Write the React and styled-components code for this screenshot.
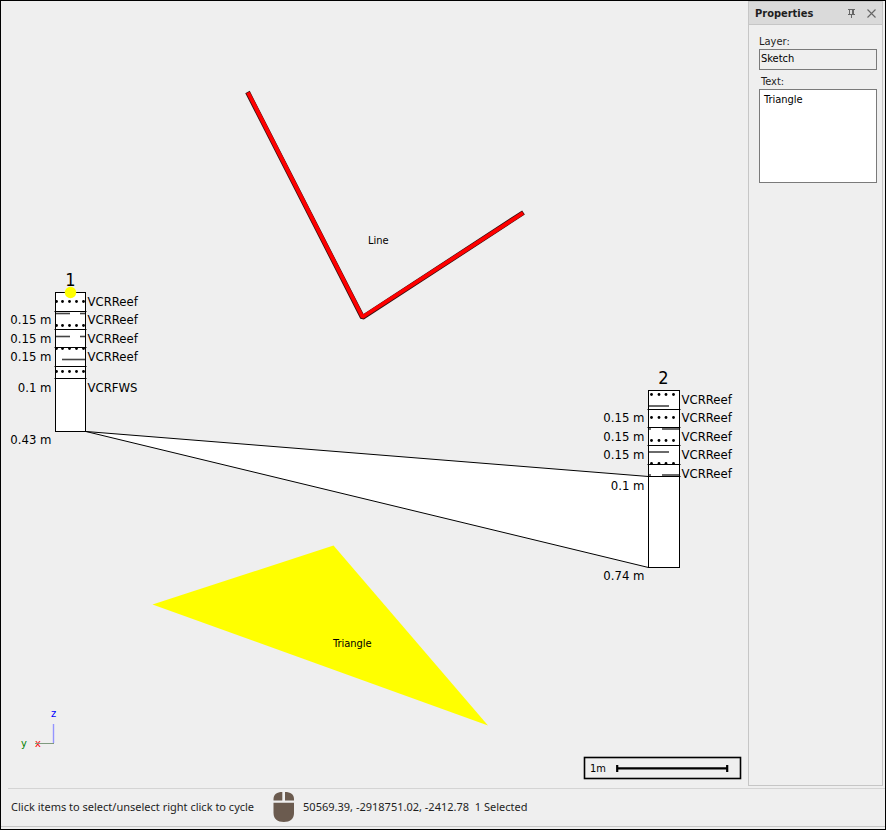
import { useState } from "react";
import styled, { createGlobalStyle } from "styled-components";

const GlobalStyle = createGlobalStyle`
  * {
    box-sizing: border-box;
  }
  body {
    margin: 0;
    background-color: #efefef;
    font-family: "DejaVu Sans Condensed", "DejaVu Sans", sans-serif;
    font-size: 11px;
    color: #1e1e1e;
  }
`;

const Window = styled.div`
  display: flex;
  flex-direction: column;
  height: 100vh;
  border: 1px solid #000;
  background-color: #efefef;
`;

const Workspace = styled.main`
  display: flex;
  flex: 1;
  min-height: 0;
`;

const Canvas = styled.svg`
  flex: 1;
  min-width: 0;
  height: 100%;
  display: block;
`;

const CanvasText = styled.text`
  font-size: ${(props) => props.$size || 13}px;
  fill: ${(props) => props.$color || "#000"};
  text-anchor: ${(props) => props.$anchor || "start"};
`;

const Panel = styled.aside`
  width: 135px;
  margin: 0 2px 2px 0;
  border: 1px solid #c6c6c6;
`;

const PanelHeader = styled.header`
  display: flex;
  align-items: center;
  height: 23px;
  padding: 0 1px 0 6px;
  background-color: #dadada;
  border-bottom: 1px solid #c6c6c6;

  h2 {
    flex: 1;
    margin: 0;
    font-size: 11px;
    font-weight: bold;
  }
`;

const IconButton = styled.button`
  display: flex;
  align-items: center;
  justify-content: center;
  width: 20px;
  height: 20px;
  padding: 0;
  border: 0;
  background: none;
  color: #666;
`;

const PanelBody = styled.div`
  display: flex;
  flex-direction: column;
  padding: 10px 5px 0 10px;
`;

const Label = styled.label`
  height: 14px;
  line-height: 14px;
  padding-left: ${(props) => (props.$indent ? 2 : 0)}px;
`;

const TextInput = styled.input`
  width: 100%;
  height: 21px;
  margin-bottom: 5px;
  padding: 0 1px 2px;
  border: 1px solid #7a7a7a;
  outline: 0;
  background-color: #efefef;
  font: inherit;
  color: #000;
`;

const TextArea = styled.textarea`
  width: 100%;
  height: 94px;
  padding: 3px 4px;
  border: 1px solid #7a7a7a;
  outline: 0;
  resize: none;
  background-color: #fff;
  font: inherit;
  line-height: 14px;
  color: #000;
`;

const StatusBar = styled.footer`
  display: flex;
  align-items: center;
  height: 38px;
  margin-left: 7px;
  padding: 0 0 2px 3px;
  border-top: 1px solid #d4d4d4;
  font-family: "Noto Sans", "Open Sans", sans-serif;
  font-size: 11px;
  white-space: pre;

  svg {
    margin: 0 7px 0 18px;
  }
`;

const BottomEdge = styled.div`
  height: 3px;
  border-top: 1px solid #c6c6c6;
`;

const columns = [
  {
    name: "1",
    x: 55.5,
    width: 30,
    top: 292.5,
    bottom: 431.5,
    titleY: 286,
    splits: [311.5, 329.5, 347.5, 366.5, 378.5],
    dotXs: [56.5, 62.5, 69.5, 76.5, 83.5],
    dotYs: [301.5, 325.5, 348.5, 371.5],
    dashes: [
      [56, 70, 313.5],
      [80, 85, 313.5],
      [56, 70, 336.5],
      [80, 85, 336.5],
      [62, 85, 359.5],
    ],
    names: [
      ["VCRReef", 306],
      ["VCRReef", 324],
      ["VCRReef", 343],
      ["VCRReef", 361],
      ["VCRFWS", 392],
    ],
    depths: [
      ["0.15 m", 324],
      ["0.15 m", 343],
      ["0.15 m", 361],
      ["0.1 m", 392],
      ["0.43 m", 444],
    ],
  },
  {
    name: "2",
    x: 648.5,
    width: 31,
    top: 390.5,
    bottom: 567.5,
    titleY: 384,
    splits: [409.5, 427.5, 445.5, 464.5, 476.5],
    dotXs: [651.5, 659, 666, 673.5],
    dotYs: [394.5, 417.5, 440.5, 463.5],
    dashes: [
      [649, 669, 406],
      [649, 651, 429],
      [662, 679, 429],
      [649, 669, 452],
      [649, 651, 475],
      [662, 679, 475],
    ],
    names: [
      ["VCRReef", 404],
      ["VCRReef", 422],
      ["VCRReef", 441],
      ["VCRReef", 459],
      ["VCRReef", 478],
    ],
    depths: [
      ["0.15 m", 422],
      ["0.15 m", 441],
      ["0.15 m", 459],
      ["0.1 m", 490],
      ["0.74 m", 580],
    ],
  },
];

const Column = ({ column }) => {
  const right = column.x + column.width;

  return (
    <g>
      <rect
        x={column.x}
        y={column.top}
        width={column.width}
        height={column.bottom - column.top}
        fill="#fff"
        stroke="#000"
      />
      {column.dashes.map(([x1, x2, y]) => (
        <line key={`${x1}-${y}`} x1={x1} x2={x2} y1={y} y2={y} stroke="#444" strokeWidth="1.6" />
      ))}
      {column.dotYs.map((y) =>
        column.dotXs.map((x) => <circle key={`${x}-${y}`} cx={x} cy={y} r="1.4" />)
      )}
      {column.splits.map((y) => (
        <line key={y} x1={column.x - 1} x2={right + 1} y1={y} y2={y} stroke="#000" />
      ))}
      <CanvasText x={column.x + 15} y={column.titleY} $size={18} $anchor="middle">
        {column.name}
      </CanvasText>
      {column.names.map(([text, y]) => (
        <CanvasText key={y} x={right + 2} y={y}>
          {text}
        </CanvasText>
      ))}
      {column.depths.map(([text, y]) => (
        <CanvasText key={y} x={column.x - 4} y={y} $anchor="end">
          {text}
        </CanvasText>
      ))}
    </g>
  );
};

const SectionView = () => (
  <Canvas viewBox="1 1 747 787" preserveAspectRatio="xMinYMin meet">
    {/* sketch layer */}
    <g fill="none" strokeLinejoin="bevel">
      <path d="M247.5 92 362.5 317.5 523.5 212.5" stroke="#3a1010" strokeWidth="5" />
      <path d="M248 92.5 362.5 317 523 213" stroke="#f00" strokeWidth="3.8" />
    </g>
    <CanvasText x="368" y="244" $size={11}>
      Line
    </CanvasText>
    <path d="M152.5 604.5 333.5 545.5 488 725.5Z" fill="#ff0" />
    <CanvasText x="333" y="647" $size={11}>
      Triangle
    </CanvasText>

    {/* correlation between the two columns */}
    <path d="M86 431.5 648.5 476.5V567.5Z" fill="#fff" />
    <path d="M86 431.5 648.5 476.5M86 431.5 648.5 567.5" stroke="#000" />
    {columns.map((column) => (
      <Column key={column.name} column={column} />
    ))}
    <circle cx="70.5" cy="292.5" r="5.7" fill="#ff0" />

    {/* axes */}
    <CanvasText x="51" y="717" $size={11} $color="#00f">
      z
    </CanvasText>
    <CanvasText x="21" y="747" $size={11} $color="#008000">
      y
    </CanvasText>
    <CanvasText x="35" y="747" $size={11} $color="#f00">
      x
    </CanvasText>
    <path d="M53.5 724V743" stroke="#9494ff" strokeWidth="1.4" />
    <path d="M35 743.5H54" stroke="#7f9a7f" />

    {/* scale bar */}
    <rect x="584.5" y="757.5" width="156" height="21" fill="none" stroke="#000" strokeWidth="1.6" />
    <path d="M617 768.3H727" stroke="#000" strokeWidth="2.2" />
    <path d="M617.2 765V772M727.2 765V772" stroke="#000" strokeWidth="2.2" />
    <CanvasText x="590" y="772" $size={11}>
      1m
    </CanvasText>
  </Canvas>
);

const PropertiesPanel = () => {
  const [text, setText] = useState("Triangle");

  return (
    <Panel>
      <PanelHeader>
        <h2>Properties</h2>
        <IconButton type="button" aria-label="Pin">
          <svg width="9" height="9" viewBox="0 0 9 9" fill="none" stroke="currentColor">
            <path d="M1 .5H8M2.5 .5V5M5.5 .5V5M6.5 .5V5M1 5.5H8M4.5 5.5V9" />
          </svg>
        </IconButton>
        <IconButton type="button" aria-label="Close">
          <svg width="9" height="9" viewBox="0 0 9 9" fill="none" stroke="currentColor">
            <path d="M.5 .5 8.5 8.5M8.5 .5 .5 8.5" strokeWidth="1.1" />
          </svg>
        </IconButton>
      </PanelHeader>
      <PanelBody>
        <Label htmlFor="layer">Layer:</Label>
        <TextInput id="layer" value="Sketch" readOnly />
        <Label htmlFor="text" $indent>
          Text:
        </Label>
        <TextArea id="text" value={text} onChange={(e) => setText(e.target.value)} />
      </PanelBody>
    </Panel>
  );
};

const MouseIcon = () => (
  <svg width="24" height="32" viewBox="0 0 24 32" fill="#6b5b4f">
    <path d="M10.3 1V9.5H1.5V8C1.5 3.5 5 1 10.3 1Z" />
    <path d="M13 1V9.5H22V8C22 3.5 18.5 1 13 1Z" />
    <path d="M1.5 11.7H22V22C22 28 18 31 11.8 31S1.5 28 1.5 22Z" />
  </svg>
);

const App = () => {
  return (
    <>
      <GlobalStyle />
      <Window>
        <Workspace>
          <SectionView />
          <PropertiesPanel />
        </Workspace>
        <StatusBar>
          <span>Click items to select/unselect right click to cycle</span>
          <MouseIcon />
          <span>50569.39, -2918751.02, -2412.78  1 Selected</span>
        </StatusBar>
        <BottomEdge />
      </Window>
    </>
  );
};

export default App;
